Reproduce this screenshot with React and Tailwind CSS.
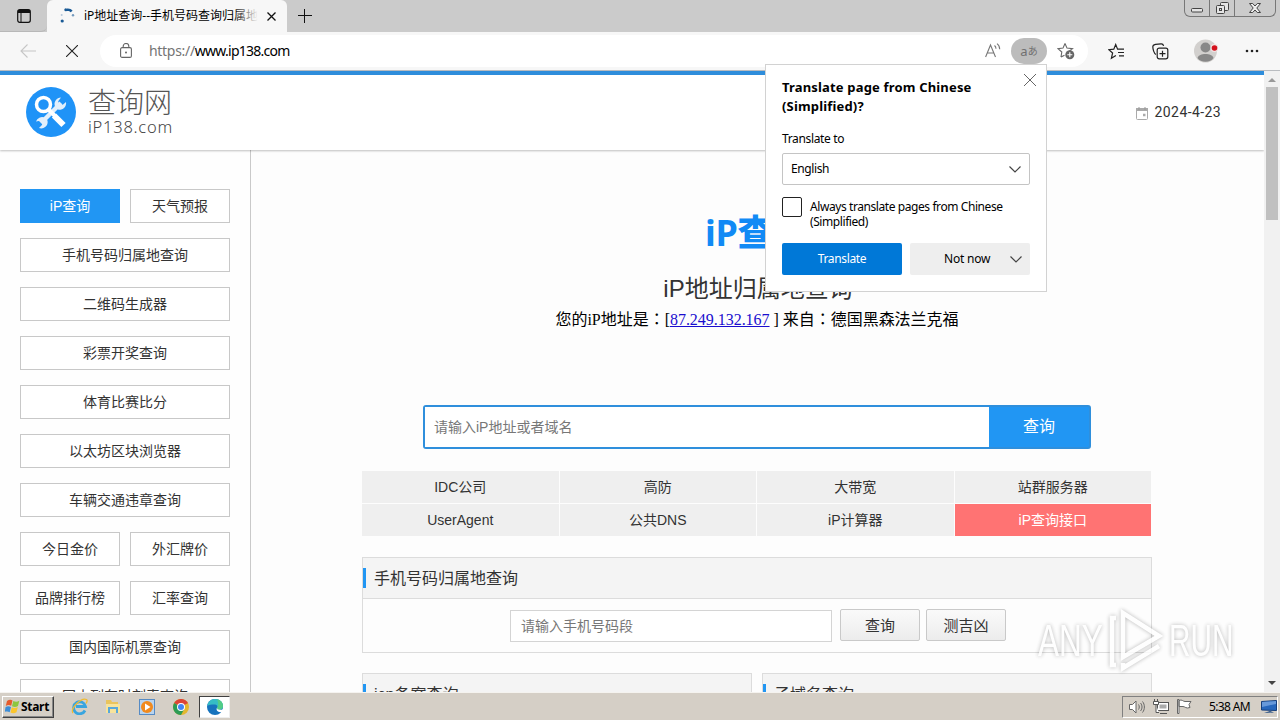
import clsx from 'clsx'

const NAV_ROWS = [
  ['iP查询', '天气预报'],
  ['手机号码归属地查询'],
  ['二维码生成器'],
  ['彩票开奖查询'],
  ['体育比赛比分'],
  ['以太坊区块浏览器'],
  ['车辆交通违章查询'],
  ['今日金价', '外汇牌价'],
  ['品牌排行榜', '汇率查询'],
  ['国内国际机票查询'],
  ['国内列车时刻表查询'],
]

const LINKS = ['IDC公司', '高防', '大带宽', '站群服务器', 'UserAgent', '公共DNS', 'iP计算器', 'iP查询接口']

function Spinner() {
  return (
    <svg className="ml-[13px] w-4 h-4" viewBox="0 0 16 16" fill="#1a5a96">
      <circle cx="1.700" cy="7" r="1" opacity=".3" />
      <circle cx="2.200" cy="13" r="1.600" />
      <circle cx="5.800" cy="1.800" r="1.500" />
      <path d="M7 .5c2.300-.3 4.300.5 5.600 2.200l-2 1.600C9.800 3.200 8.500 2.900 7 3.100z" />
      <circle cx="13" cy="7.300" r="1.200" opacity=".6" />
    </svg>
  )
}

function TabStrip() {
  return (
    <div className="relative flex h-8 bg-[#cbcbcb]">
      <div className="w-[47px] h-8 rounded-br-md border-b border-[#b8b8b8] flex items-center">
        <svg className="ml-[17px] w-[14px] h-[14px]" viewBox="0 0 14 14" fill="none" stroke="#111">
          <rect x=".7" y=".7" width="12.600" height="12.600" rx="2" strokeWidth="1.200" />
          <path d="M1 2.500h12" strokeWidth="3" />
          <path d="M4 3v10" />
        </svg>
      </div>
      <div className="w-[240px] h-8 bg-[#f7f7f7] rounded-t-md flex items-center text-black">
        <Spinner />
        <div className="relative ml-[8px] w-[174px] overflow-hidden whitespace-nowrap text-[12px] leading-5">
          iP地址查询--手机号码查询归属地
          <div className="absolute right-0 top-0 w-6 h-5 bg-linear-to-r from-transparent to-[#f7f7f7]" />
        </div>
        <svg className="ml-[9px] w-[9px] h-[9px]" viewBox="0 0 9 9" stroke="#111" strokeWidth="1.300">
          <path d="M.5.500l8 8M8.500.500l-8 8" />
        </svg>
      </div>
      <svg className="ml-[11px] mt-[9px] w-[14px] h-[14px]" viewBox="0 0 14 14" stroke="#111" strokeWidth="1">
        <path d="M0 6.500h14M6.500 0v14" />
      </svg>
      <div className="absolute right-[4px] top-0 flex h-[17px] border border-t-0 border-[#777] rounded-b-md text-[#444]">
        <div className="w-[25px] border-r border-[#777] flex justify-center">
          <svg className="w-3 h-4" viewBox="0 0 12 16" fill="#e4e4e4" stroke="currentColor">
            <rect x=".5" y="8.500" width="11" height="3.500" rx="1" />
          </svg>
        </div>
        <div className="w-[25px] border-r border-[#777] flex justify-center">
          <svg className="w-[13px] h-4" viewBox="0 0 13 16" fill="#e4e4e4" stroke="currentColor">
            <rect x="4.500" y="2.500" width="8" height="8" rx="1" />
            <rect x=".5" y="5.500" width="8" height="8" rx="1" />
            <rect x="3.500" y="8.500" width="2" height="2" />
          </svg>
        </div>
        <div className="w-[40px] flex justify-center">
          <svg className="w-[12px] h-4" viewBox="0 0 12 16" fill="#eee" stroke="currentColor">
            <path d="M.5 3.500h3.200L6 6l2.300-2.500h3.200L7.800 8l3.700 4.500H8.300L6 10l-2.300 2.500H.5L4.200 8z" />
          </svg>
        </div>
      </div>
    </div>
  )
}

function Toolbar() {
  return (
    <div className="flex h-[39px] items-center bg-[#f7f7f7] border-b border-[#b9bcc0]">
      <svg className="ml-[20px] w-4 h-4" viewBox="0 0 16 16" fill="none" stroke="#c6c6c6" strokeWidth="1.100">
        <path d="M16 8H1M7.500 1.500L1 8l6.500 6.500" />
      </svg>
      <svg className="ml-[30px] w-3 h-3" viewBox="0 0 12 12" stroke="#222" strokeWidth="1.100">
        <path d="M0 0l12 12M12 0L0 12" />
      </svg>
      <div className="ml-[22px] w-[988px] h-8 rounded-full bg-white flex items-center">
        <svg className="ml-[20px] w-[12px] h-[16px]" viewBox="0 0 12 16" fill="none" stroke="#666" strokeWidth="1.100">
          <rect x=".6" y="4.600" width="10.800" height="9.800" rx="1.500" />
          <path d="M3.200 4.600V3.300a2.800 2.800 0 0 1 5.600 0v1.300" />
          <circle cx="6" cy="9.500" r=".9" fill="#555" stroke="none" />
        </svg>
        <div className="ml-[17px] w-[836px] text-[14px] leading-5 text-black">
          <span className="text-[#757575] tracking-[-0.3px]">https://</span>
          <span className="tracking-[-0.75px]">www.ip138.com</span>
        </div>
        <svg className="w-4 h-4" viewBox="0 0 16 16" fill="none" stroke="#777" strokeWidth="1.100">
          <path d="M.6 14L5.500 2l5 12M2.300 10h6.500M9.500 2.500c1 .8 1.500 2 1.500 3.300M12 .6c1.800 1.300 2.700 3.200 2.700 5.600" />
        </svg>
        <div className="ml-[10px] w-9 h-[26px] rounded-full bg-[#bcbcbc] text-[#707070] text-[13px] flex items-center justify-center leading-none">
          a<span className="text-[10px]">あ</span>
        </div>
        <svg className="ml-[10px] w-[18px] h-[18px]" viewBox="0 0 18 18" fill="none" stroke="#666" strokeWidth="1.100">
          <path d="M8 1.500l2 4.600 5.500.5-3.200 2.500M4 15l.8-5L1 6.700l5-.6 2-4.600M4 15l3.500-1.800" />
          <circle cx="12.800" cy="12.800" r="4.500" fill="#666" stroke="none" />
          <path d="M12.800 10.300v5M10.300 12.800h5" stroke="#fff" />
        </svg>
      </div>
      <svg className="ml-[20px] w-[18px] h-[17px]" viewBox="0 0 18 17" fill="none" stroke="#222" strokeWidth="1.200">
        <path d="M16 6.200H9.600L7.700 1.500 5.800 6.200.8 6.700l3.800 3.300-1.200 5.300 4.500-2.800M10 9.500H16M11 12.800H16" />
      </svg>
      <svg className="ml-[26px] w-[17px] h-[17px]" viewBox="0 0 17 17" fill="none" stroke="#222" strokeWidth="1.200">
        <rect x="5.200" y="5.200" width="10.600" height="10.600" rx="2" />
        <path d="M10.500 7.700v6M7.500 10.700h6M4 11.500C2 11 .8 5.500.8 3.800.8 2 2 1.700 3.500 1.400L9 .800c1.600-.2 2.200.4 2.600 2" />
      </svg>
      <svg className="ml-[25px] w-[24px] h-[24px]" viewBox="0 0 24 24">
        <circle cx="11.500" cy="12" r="11.500" fill="#d2d0ce" />
        <circle cx="11.500" cy="8.500" r="5" fill="#888" />
        <path d="M3.500 19c1-3 4-4 8-4s7 1 8 4c-3 5-13 5-16 0z" fill="#888" />
        <circle cx="20.500" cy="9" r="4" fill="#f1e4e4" />
        <circle cx="20.500" cy="9" r="2.800" fill="#d4111c" />
      </svg>
      <svg className="ml-[27px] w-[14px] h-1" viewBox="0 0 14 4" fill="#222">
        <circle cx="2" cy="2" r="1.300" />
        <circle cx="7" cy="2" r="1.300" />
        <circle cx="12" cy="2" r="1.300" />
      </svg>
    </div>
  )
}

function Logo() {
  return (
    <div className="flex items-center -mt-px">
      <svg className="ml-[26px] w-[50px] h-[50px]" viewBox="0 0 50 50" fill="none">
        <circle cx="25" cy="25" r="25" fill="#1f93f7" />
        {/* wrench */}
        <path d="M15 36L35 16" stroke="#e2effb" strokeWidth="4.500" />
        <path d="M35 10.500a6.500 6.500 0 0 0-6 9l3 3a6.500 6.500 0 0 0 8-7.500l-3.500 3-3.500-.8-.8-3z" fill="#e2effb" />
        <path d="M10 34.500a6.500 6.500 0 0 1 8.500-4l3 3a6.500 6.500 0 0 1-8.500 7.500l3.200-3.200-.8-3-3-.8z" fill="#e2effb" />
        {/* magnifier */}
        <path d="M22 22l7 7" stroke="#fff" strokeWidth="4" />
        <path d="M28 28.500l9.500 9.500" stroke="#fff" strokeWidth="6" />
        <circle cx="17.500" cy="17.500" r="7" fill="#1f93f7" stroke="#fff" strokeWidth="3.500" />
      </svg>
      <div className="ml-[12px] text-[#555] font-['Noto_Sans','Noto_Sans_CJK_SC',sans-serif]">
        <div className="text-[28px] leading-[29px] font-light">查询网</div>
        <div className="text-[16.5px] leading-[19px] font-light tracking-[0.75px] text-[#444]">iP138.com</div>
      </div>
    </div>
  )
}

function SiteHeader() {
  return (
    <header className="relative z-10 flex shrink-0 items-center justify-between h-[79px] bg-white border-t-4 border-[#2e8ddb] shadow-[0_1px_2px_rgba(0,0,0,0.25)]">
      <Logo />
      <div className="flex items-center pr-[43px] text-[14px] text-[#333]">
        <svg className="mr-[7px] mt-[2px] w-3 h-[13px]" viewBox="0 0 12 13" fill="none" stroke="#aaa">
          <rect x=".5" y="1.500" width="11" height="11" rx="1" />
          <path d="M0 2.500h12" strokeWidth="3" />
          <path d="M3 0v3M9 0v3" stroke="#999" />
          <path d="M7 8h2.500" strokeWidth="2.500" />
        </svg>
        <span className="font-['Roboto','Liberation_Sans',sans-serif] tracking-[0.4px]">2024-4-23</span>
      </div>
    </header>
  )
}

function Sidebar() {
  return (
    <aside className="w-[251px] shrink-0 border-r border-[#c9c9c9] bg-[#fefefe] px-5 pt-[39px] space-y-[15px]">
      {NAV_ROWS.map((row, i) => (
        <div key={i} className="flex gap-[10px]">
          {row.map((label) => (
            <a
              key={label}
              className={clsx(
                'flex-1 h-[34px] border text-center text-[14px] leading-[32px] whitespace-nowrap',
                label === 'iP查询' ? 'bg-[#2196f3] border-[#2196f3] text-white' : 'bg-white border-[#c8c8c8] text-[#333]'
              )}
            >
              {label}
            </a>
          ))}
        </div>
      ))}
    </aside>
  )
}

function PanelTitle({ children }) {
  return (
    <div className="flex items-center h-[41px] bg-[#f4f4f4] border-b border-[#dcdcdc]">
      <span className="w-[3px] h-5 bg-[#2196f3]" />
      <span className="ml-2 pt-px text-[16px] leading-6 text-[#333]">{children}</span>
    </div>
  )
}

// full-width colon centred in its cell
function Colon() {
  return <span className="leading-none font-['Noto_Sans_CJK_TC',sans-serif]">：</span>
}

function Main() {
  return (
    <main className="flex-1 bg-[#fdfdfd] pl-[111px] pr-[112px]">
      <div className="w-[790px] text-center whitespace-nowrap">
        <h1 className="h-[108px] pt-[58px] text-[36px] leading-[50px] font-bold tracking-[-0.3px] text-[#118af5] font-['Noto_Sans','Noto_Sans_CJK_SC',sans-serif]">
          iP<span className="font-black">查询</span>
        </h1>
        <h2 className="mt-[13px] pl-[2px] h-[34px] text-[24px] leading-[36px] text-[#333]">iP地址归属地查询</h2>
        <p className="mt-[3px] h-6 text-[16px] leading-6 tracking-[-0.03px] text-black font-['Liberation_Serif','Noto_Sans_CJK_SC',serif]">
          您的iP地址是<Colon />[<a className="text-[#1a0dcf] underline">87.249.132.167</a> ] 来自<Colon />德国黑森法兰克福
        </p>
      </div>
      <div className="mt-[73px] ml-[61px] flex w-[668px] h-11 border-2 border-[#2f8fdc] rounded-[3px] bg-[#2196f3]">
        <div className="w-[564px] bg-white pl-[9px] text-[14px] leading-10 text-[#777]">请输入iP地址或者域名</div>
        <div className="flex-1 text-center text-[16px] leading-10 text-white">查询</div>
      </div>
      <div className="mt-[22px] grid grid-cols-4 gap-px w-[789px]">
        {LINKS.map((label) => (
          <a
            key={label}
            className={clsx(
              'h-8 text-center text-[14px] leading-8',
              label === 'iP查询接口' ? 'bg-[#ff7373] text-white' : 'bg-[#efefef] text-[#333]'
            )}
          >
            {label}
          </a>
        ))}
      </div>
      <section className="mt-[21px] w-[790px] h-[96px] border border-[#dcdcdc]">
        <PanelTitle>手机号码归属地查询</PanelTitle>
        <div className="flex pt-[10px] pl-[147px] text-[#333]">
          <div className="mt-px w-[322px] h-8 border border-[#d4d4d4] bg-white pl-[10px] text-[14px] leading-[30px] text-[#777]">
            请输入手机号码段
          </div>
          <div className="ml-2 w-20 h-8 border border-[#c9c9c9] rounded-[2px] bg-linear-to-b from-[#fafafa] to-[#ececec] text-center text-[15px] leading-[31px]">查询</div>
          <div className="ml-[6px] w-20 h-8 border border-[#c9c9c9] rounded-[2px] bg-linear-to-b from-[#fafafa] to-[#ececec] text-center text-[15px] leading-[31px]">测吉凶</div>
        </div>
      </section>
      <div className="mt-5 flex gap-[10px]">
        <section className="w-[390px] border border-[#dcdcdc]">
          <PanelTitle>icp备案查询</PanelTitle>
        </section>
        <section className="w-[390px] border border-[#dcdcdc]">
          <PanelTitle>子域名查询</PanelTitle>
        </section>
      </div>
    </main>
  )
}

function Scrollbar() {
  return (
    <div className="w-4 shrink-0 bg-[#f1f1f1] flex flex-col items-center">
      <svg className="mt-[7px] w-2 h-1" viewBox="0 0 8 4" fill="#999"><path d="M0 4l4-4 4 4z" /></svg>
      <div className="mt-[5px] w-3 h-[133px] bg-[#c0c0c0]" />
      <svg className="mt-auto mb-[7px] w-2 h-1" viewBox="0 0 8 4" fill="#444"><path d="M0 0l4 4 4-4z" /></svg>
    </div>
  )
}

function Chevron({ className }) {
  return (
    <svg className={clsx('h-[7px]', className)} viewBox="0 0 12 7" fill="none" stroke="#444" strokeWidth="1.200">
      <path d="M.5.500L6 6 11.500.500" />
    </svg>
  )
}

function TranslatePopup() {
  return (
    <div className="absolute left-[765px] top-[64px] z-20 w-[282px] h-[228px] bg-white border border-[#d2d2d2] px-4 pt-[13px] text-[12px] text-black">
      <svg className="absolute right-[10px] top-[9px] w-3 h-3" viewBox="0 0 12 12" stroke="#666">
        <path d="M0 0l12 12M12 0L0 12" />
      </svg>
      <h3 className="text-[13px] leading-[19px] font-bold whitespace-nowrap tracking-[0.17px]">
        Translate page from Chinese
        <br />
        (Simplified)?
      </h3>
      <div className="mt-[15px] leading-4 tracking-[-0.35px]">Translate to</div>
      <div className="mt-[6px] flex items-center justify-between h-8 border border-[#c4c4c4] rounded-[2px] pl-2 pr-2">
        <span className="tracking-[-0.4px]">English</span>
        <Chevron className="w-3" />
      </div>
      <div className="mt-3 flex">
        <div className="w-5 h-5 border border-[#222] rounded-[2px]" />
        <div className="ml-2 mt-[2px] leading-[15px] whitespace-nowrap tracking-[-0.42px]">
          Always translate pages from Chinese
          <br />
          (Simplified)
        </div>
      </div>
      <div className="mt-[14px] flex gap-2">
        <div className="w-[120px] h-8 rounded-[2px] bg-[#0078d7] text-center leading-8 tracking-[-0.35px] text-white">Translate</div>
        <div className="relative w-[120px] h-8 rounded-[2px] bg-[#eee] pl-[34px] leading-8 tracking-[-0.2px]">
          Not now
          <Chevron className="absolute right-2 top-[13px] w-3" />
        </div>
      </div>
    </div>
  )
}

function Watermark() {
  return (
    <div className="absolute left-[1038px] top-[608px] z-20 flex items-center h-[66px] text-white drop-shadow-[0_0_2px_rgba(0,0,0,0.35)] opacity-80 font-['Liberation_Sans',sans-serif]">
      <span className="w-[69px] text-[45px] leading-[60px] origin-left scale-x-[0.7]">ANY</span>
      <svg className="w-[58px] h-[64px]" viewBox="0 0 58 64" fill="none" stroke="#fff" strokeWidth="4.500">
        <path d="M16 4v44l36-21zM9 9H5v47h4M16 54v5L52 37" />
      </svg>
      <span className="ml-[4px] w-[66px] text-[45px] leading-[60px] origin-left scale-x-[0.66]">RUN</span>
    </div>
  )
}

function Taskbar() {
  return (
    <div className="relative z-30 flex items-center h-7 bg-[#d5cfc6] border-t border-[#f5f3ef] text-black">
      <div className="ml-[2px] flex items-center w-[52px] h-[22px] border border-t-white border-l-white border-r-[#404040] border-b-[#404040] shadow-[inset_-1px_-1px_0_#888]">
        <svg className="ml-[2px] w-[15px] h-[15px]" viewBox="0 0 15 15">
          <path d="M2 2c2-1.500 4-1.500 5.500-.5L6.200 6.800C4.500 5.800 2.500 5.800.8 7z" fill="#e65b2c" />
          <path d="M8.300 2c2 1 4 1 6-.2L13 7c-2 1.300-4 1.200-6 .2z" fill="#8dc63f" />
          <path d="M.6 8c2-1.300 3.800-1 5.400 0l-1.300 5.200c-1.600-1-3.500-1-5-.2z" fill="#3c8dd7" />
          <path d="M6.800 8.300c2 1 4 .8 6-.2l-1.300 5.100c-2 1.300-4 1.300-6 .3z" fill="#fbc52c" />
        </svg>
        <span className="ml-[1px] text-[12px] leading-4 font-bold tracking-[-0.3px]">Start</span>
      </div>
      <svg className="ml-[17px] w-[17px] h-[17px]" viewBox="0 0 17 17" fill="none">
        <path d="M14 12.500A6 6 0 1 1 14.500 8.500H5" stroke="#39a5df" strokeWidth="2.800" />
        <path d="M2 15C-1 11 10-1 15.500 1.500c1 .8.500 2.500-.5 4" stroke="#f0bb32" strokeWidth="1.300" />
      </svg>
      <svg className="ml-[17px] w-4 h-[17px]" viewBox="0 0 16 17">
        <path d="M1 2h5l1 2h6v5H1z" fill="#e9c45d" />
        <path d="M1 6h14v9H1z" fill="#f7e39b" />
        <path d="M3 9h10v6h-2v-4H5v4H3z" fill="#58a8da" />
      </svg>
      <svg className="ml-[18px] w-4 h-4" viewBox="0 0 16 16">
        <rect x=".5" y=".5" width="15" height="15" fill="#b9d4ee" stroke="#568bc4" />
        <circle cx="8" cy="8" r="6" fill="#f18a1d" />
        <path d="M6 4.500L11.500 8 6 11.500z" fill="#fff" />
      </svg>
      <svg className="ml-[18px] w-4 h-4" viewBox="0 0 16 16">
        <circle cx="8" cy="8" r="8" fill="#e3b72f" />
        <path d="M8 8L1.100 4A8 8 0 0 1 15 4z" fill="#dc4437" />
        <path d="M1.100 4A8 8 0 0 0 8 16l3.300-6z" fill="#2c9b55" />
        <circle cx="8" cy="8" r="4" fill="#fff" />
        <circle cx="8" cy="8" r="3" fill="#4285f4" />
      </svg>
      <div className="ml-[10px] flex items-center justify-center w-[31px] h-[22px] bg-white border border-t-[#404040] border-l-[#404040] border-r-[#eee] border-b-[#eee]">
        <svg className="w-4 h-4" viewBox="0 0 16 16">
          <circle cx="8" cy="8" r="8" fill="#1673bd" />
          <path d="M.3 6.500C1.500 2 4.500 0 8.300 0 13 0 16 3.500 16 7c0 3-2.500 4-5 3.700-1.500-.2-1.500-1-.7-2 .8-1.500-.7-3.200-3-3.200-3 0-5.500.5-7 1z" fill="#35bdc5" />
          <path d="M10 .3c4 .8 6 3.700 6 6.700 0 3-2.500 4-5 3.700-1.500-.2-1.500-1-.7-2C12 6 11 3 10 .3z" fill="#52cc87" />
          <path d="M10.300 8.500c-1 2 2 3 5.700 1.700v2.300c-4 2-8-1-5.700-4z" fill="#fff" />
        </svg>
      </div>
      <div className="ml-auto mr-[2px] flex items-center w-[156px] h-[22px] border border-t-[#808080] border-l-[#808080] border-r-white border-b-white">
        <svg className="ml-[6px] w-4 h-[14px]" viewBox="0 0 16 14" fill="none" stroke="#666">
          <path d="M.5 4.500h3L7 1v12L3.500 9.500h-3z" fill="#fff" />
          <path d="M9.500 4.500c1 1.500 1 3.500 0 5M11.500 3c2 2.300 2 5.700 0 8M13.500 1.500c2.500 3 2.500 8 0 11" />
        </svg>
        <svg className="ml-[8px] w-4 h-[15px]" viewBox="0 0 16 15" stroke="#555" fill="#fff">
          <rect x="4.500" y="3.500" width="11" height="8" />
          <rect x="6.500" y="5.500" width="7" height="4" fill="#aaa" stroke="none" />
          <path d="M7 14.500h7M.5 2.500h5v3h-5zM1.500 0v2M4.500 0v2M3 6v7.500h3" />
        </svg>
        <svg className="ml-[8px] w-[15px] h-[15px]" viewBox="0 0 15 15" stroke="#666" fill="#fff">
          <path d="M.5.500v14h1.500v-14zM2 1.500c3-1.500 4 1 6 1h6l-2 3 1 3c-4 1.500-5-1-7-1H2z" />
        </svg>
        <span className="ml-[17px] text-[12px] leading-4 tracking-[-0.65px] whitespace-nowrap">5:38 AM</span>
        <svg className="ml-auto mr-0 w-4 h-[14px]" viewBox="0 0 16 14">
          <path d="M.5 1.500L15.500.500v10l-15-.5z" fill="#2767bc" stroke="#163f7c" />
          <path d="M1 2l14-1v3L1 7z" fill="#6799da" />
          <path d="M3 13l6-2 4 1.500z" fill="#244d82" />
        </svg>
      </div>
    </div>
  )
}

export default function App() {
  return (
    <div className="relative w-[1280px] h-[720px] overflow-hidden bg-white font-['Noto_Sans','Noto_Sans_CJK_SC',sans-serif]">
      <TabStrip />
      <Toolbar />
      <div className="flex h-[621px] overflow-hidden">
        <div className="flex flex-col w-[1264px] h-full overflow-hidden font-['Liberation_Sans','Noto_Sans_CJK_SC',sans-serif]">
          <SiteHeader />
          <div className="flex flex-1 min-h-0">
            <Sidebar />
            <Main />
          </div>
        </div>
        <Scrollbar />
      </div>
      <TranslatePopup />
      <Watermark />
      <Taskbar />
    </div>
  )
}
